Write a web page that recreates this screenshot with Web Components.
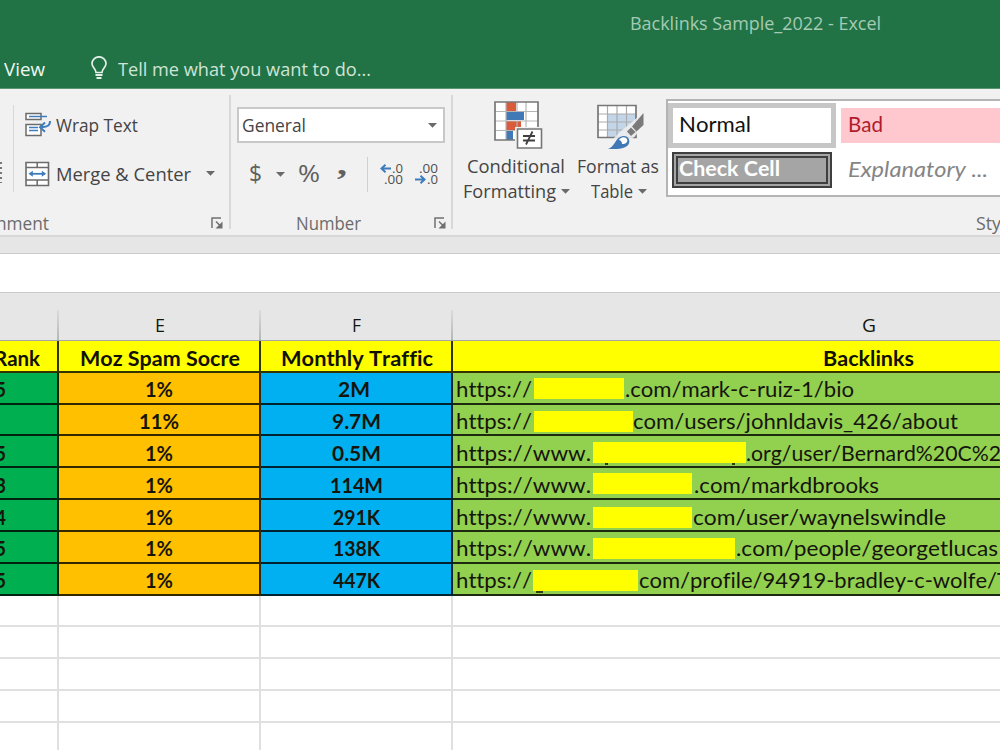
<!DOCTYPE html>
<html lang="en">
<head>
<meta charset="utf-8">
<title>Backlinks Sample_2022 - Excel</title>
<style>
    html, body { margin: 0; width: 1000px; height: 750px; overflow: hidden; background: #fff; }
</style>
</head>
<body>
<excel-window></excel-window>

<script>
// One line of text, squeezed or stretched to the width given in the "w" attribute
class FitText extends HTMLElement {
    constructor() {
        super();
        this.attachShadow({ mode: 'open' });
        this.shadowRoot.innerHTML = `
            <style>
                :host { display: inline-block; flex: none; white-space: nowrap; line-height: 1.2; font-variant-ligatures: none; font-kerning: none; }
                span { display: inline-block; transform-origin: 0 50%; }
            </style>
            <span><slot></slot></span>
        `;
    }

    connectedCallback() {
        const w = parseFloat(this.getAttribute('w'));
        const span = this.shadowRoot.querySelector('span');
        const natural = span.getBoundingClientRect().width;
        this.style.width = w + 'px';
        if (natural > 0) {
            span.style.transform = `scaleX(${w / natural})`;
        }
    }
}

const ICONS = {
    bulb: [16, 24, `<g fill="none" stroke="#e4f0e8" stroke-width="1.7"><path d="M5 16.5C5 13 1 11.500 1 7.500a7 6.700 0 0 1 14 0C15 11.500 11 13 11 16.500Z"/><path d="M4.500 19h7M5.500 22h5" stroke-width="2"/></g>`],
    wrap: [27, 26, `<g fill="#fff" stroke="#6b6b6b" stroke-width="1.500"><path d="M1 1.500h15v6H1zM1 12.500h15v11H1z"/></g><path d="M4 4.500h18M4 15.500h9M4 18.500h9" stroke="#3e7cbc" stroke-width="1.500"/><path d="M25 9c.3 4-2 6.200-8 6.200M20 10.500l-5 4.700 5 4.500" fill="none" stroke="#3e7cbc" stroke-width="2"/>`],
    merge: [25, 26, `<path d="M1 1.500h22.500v23H1z" fill="#fff" stroke="#6b6b6b" stroke-width="1.600"/><path d="M1 6.500h22.500M1 19h22.500M12.200 1.500v5M12.200 19v5" stroke="#6b6b6b" stroke-width="1.500"/><path d="M5 12.800h15" stroke="#3e7cbc" stroke-width="1.800"/><path d="M7.800 9.800v6L3.500 12.800zM16.800 9.800v6l4.300-3z" fill="#3e7cbc"/>`],
    caret: [9, 5, `<path d="M0 0h9L4.500 4.800z" fill="#6a6a6a"/>`],
    launcher: [12, 12, `<path d="M1 11V1h9" fill="none" stroke="#707070" stroke-width="1.500"/><path d="M5 4.500l4.500 4.500" stroke="#707070" stroke-width="1.500"/><path d="M11.500 4.500v7h-7z" fill="#707070"/>`],
    arrowLeft: [11, 9, `<path d="M11 4.500H2M5.500.8L1.500 4.500l4 3.700" fill="none" stroke="#3e7cbc" stroke-width="2"/>`],
    arrowRight: [11, 9, `<path d="M0 4.500h9M5.500.8l4 3.700-4 3.700" fill="none" stroke="#3e7cbc" stroke-width="2"/>`],
    conditional: [49, 49, `
        <path d="M1 1h43v38H1z" fill="#fff"/>
        <path d="M12 1h10v9H12zM12 20h15v9H12z" fill="#d95b3c"/>
        <path d="M12 11h18v8H12zM12 30h7v9h-7z" fill="#4079b5"/>
        <path d="M1 10.500h43M1 20h43M1 29.500h43M12 1v38M23 1v9M32 1v38M23 20v9" stroke="#b5b5b5" stroke-width="1.200"/>
        <path d="M1 1h43v38H1z" fill="none" stroke="#777" stroke-width="1.700"/>
        <path d="M21 26h28v23H21z" fill="#f1f1f1"/>
        <path d="M23.500 28h24v19h-24z" fill="#fff" stroke="#777" stroke-width="1.600"/>
        <path d="M29 35h12M29 39.500h12M38.500 30.500l-6.500 13" stroke="#404040" stroke-width="1.800"/>`],
    formatTable: [48, 46, `
        <path d="M1 1.500h38v32H1z" fill="#fff"/>
        <path d="M11 10h28v23.500H11z" fill="#c3d5e9"/>
        <path d="M1 10h38M1 18h38M1 26h38M10.500 1.500v32M20 1.500v32M29.500 1.500v32" stroke="#ababab" stroke-width="1.200"/>
        <path d="M1 1.500h38v32H1z" fill="none" stroke="#777" stroke-width="1.700"/>
        <path d="M48 7v15L33 37H14l9-9z" fill="#f1f1f1" opacity=".85"/>
        <path d="M46.500 9v12l-7 6.500-4.500-5z" fill="#7a7a7a"/>
        <path d="M34 23.500l4.500 4.500-4.500 4-4-4.500z" fill="#7a7a7a"/>
        <path d="M11 45c5-2 6-5.500 9-9.500 3-4 10-5 12 0 2 6-5 9.500-12 9.500z" fill="#4079b5"/>
        <path d="M22 36c2-4 8-3.500 8.300.5.2 2.500-3 4-5.300 3.500 0-2-1-3.500-3-4z" fill="#fff"/>`]
};

class XlIcon extends HTMLElement {
    constructor() {
        super();
        this.attachShadow({ mode: 'open' });
    }

    connectedCallback() {
        const [w, h, body] = ICONS[this.getAttribute('name')];
        this.shadowRoot.innerHTML = `
            <style>
                :host { display: block; flex: none; width: ${w}px; height: ${h}px; }
                svg { display: block; }
            </style>
            <svg width="${w}" height="${h}" viewBox="0 0 ${w} ${h}">${body}</svg>
        `;
    }
}

class TitleBar extends HTMLElement {
    constructor() {
        super();
        this.attachShadow({ mode: 'open' });
        this.shadowRoot.innerHTML = `
            <style>
                :host { display: block; height: 89px; background: #217346; box-sizing: border-box; border-bottom: 1px solid #5b9673; }
                .title { display: flex; align-items: center; height: 46px; padding-left: 630px; color: #a5cbb4; }
                .tabs { display: flex; align-items: center; height: 46px; padding-left: 4px; color: #f0f7f2; }
                xl-icon { margin: -2px 11px 0 46px; }
                .tell { color: #cfe4d7; }
            </style>
            <div class="title"><fit-text w="251">Backlinks Sample_2022 - Excel</fit-text></div>
            <div class="tabs">
                <fit-text w="41">View</fit-text>
                <xl-icon name="bulb"></xl-icon>
                <fit-text class="tell" w="253">Tell me what you want to do...</fit-text>
            </div>
        `;
    }
}

// Ribbon group: content on top, caption and dialog launcher at the foot
class RibbonGroup extends HTMLElement {
    constructor() {
        super();
        this.attachShadow({ mode: 'open' });
        this.shadowRoot.innerHTML = `
            <style>
                :host { display: flex; flex-direction: column; flex: none; box-sizing: border-box; height: 134px; margin-top: 6px; border-right: 2px solid #d8d8d8; }
                .body { flex: none; height: 115px; }
                .foot { display: flex; align-items: center; flex: none; height: 26px; color: #6b6b6b; font-size: 17.500px; }
            </style>
            <div class="body"><slot></slot></div>
            <div class="foot"><slot name="foot"></slot></div>
        `;
    }
}

class StyleGallery extends HTMLElement {
    constructor() {
        super();
        this.attachShadow({ mode: 'open' });
        this.shadowRoot.innerHTML = `
            <style>
                :host { display: grid; grid-template-columns: 168px 240px; grid-template-rows: 45px 45px; column-gap: 5px; box-sizing: border-box; width: 420px; height: 98px; padding-top: 2px; background: #fff; border: 2px solid #b4b4b4; border-right: 0; font: 21.500px Lato, sans-serif; }
                div { box-sizing: border-box; display: flex; align-items: center; }
                .normal { border: 5px solid #c6c6c6; padding: 0 0 2px 6px; color: #111; }
                .bad { margin: 5px 0; padding: 0 0 2px 7px; background: #ffc7ce; color: #b01c2b; }
                .check { margin: 4px 4px 5px; border: 6px double #3f3f3f; background: #a5a5a5; color: #fff; font-weight: bold; padding: 0 0 2px 1px; }
                .expl { padding: 0 0 2px 7px; color: #858585; font-style: italic; }
            </style>
            <div class="normal"><fit-text w="72">Normal</fit-text></div>
            <div class="bad"><fit-text w="35">Bad</fit-text></div>
            <div class="check"><fit-text w="101">Check Cell</fit-text></div>
            <div class="expl"><fit-text w="140">Explanatory ...</fit-text></div>
        `;
    }
}

class ExcelRibbon extends HTMLElement {
    constructor() {
        super();
        this.attachShadow({ mode: 'open' });
        this.shadowRoot.innerHTML = `
            <style>
                :host { display: flex; box-sizing: border-box; height: 148px; background: #f1f1f1; border-bottom: 2px solid #d8d8d8; overflow: hidden; color: #444; }
                .row { display: flex; align-items: center; }
                .align { width: 231px; }
                .number { width: 222px; }
                .styles { width: 900px; border: 0; }
                .align-body { display: flex; }
                .stub { width: 2px; height: 21px; margin: 67px 11px 0 0; background: repeating-linear-gradient(#777 0 1.500px, transparent 1.500px 5px); }
                .sep { width: 1px; height: 87px; margin-top: 10px; background: #d8d8d8; }
                .buttons { padding: 5px 0 0 11px; }
                .buttons .row { height: 49px; }
                .buttons fit-text { margin: 2px 0 0 4px; }
                .select { box-sizing: border-box; width: 208px; height: 36px; margin: 12px 0 0 6px; padding: 0 6px 0 3px; border: 2px solid #c8c8c8; background: #fff; justify-content: space-between; }
                .formats { height: 62px; padding-left: 18px; color: #606060; }
                .sign { font-size: 23px; }
                .comma { font: bold 30px/30px "Liberation Serif", serif; height: 50px; }
                .dec { font-size: 13.500px; color: #505050; }
                .dec div { display: flex; align-items: center; height: 11px; }
                .dec fit-text { line-height: 11px; }
                .styles-body { display: flex; }
                .big { display: flex; flex-direction: column; align-items: center; }
                .big .row { height: 25px; }
                .big .row xl-icon { margin-left: 5px; }
            </style>
            <ribbon-group class="align">
                <div class="align-body">
                    <div class="stub"></div>
                    <div class="sep"></div>
                    <div class="buttons">
                        <div class="row"><xl-icon name="wrap"></xl-icon><fit-text w="82">Wrap Text</fit-text></div>
                        <div class="row"><xl-icon name="merge"></xl-icon><fit-text w="135" style="margin-left:6px">Merge &amp; Center</fit-text><xl-icon name="caret" style="margin-left:15px"></xl-icon></div>
                    </div>
                </div>
                <fit-text slot="foot" w="53" style="margin-left:-4px">nment</fit-text>
                <xl-icon slot="foot" name="launcher" style="margin-left:162px"></xl-icon>
            </ribbon-group>
            <ribbon-group class="number">
                <div class="row select"><fit-text w="64">General</fit-text><xl-icon name="caret"></xl-icon></div>
                <div class="row formats">
                    <fit-text class="sign" w="13">$</fit-text>
                    <xl-icon name="caret" style="margin-left:14px"></xl-icon>
                    <fit-text class="sign" w="22" style="margin-left:13px">%</fit-text>
                    <fit-text class="comma" w="10" style="margin-left:17px">,</fit-text>
                    <div style="width:1px;height:35px;margin-left:20px;background:#d0d0d0"></div>
                    <div class="dec" style="margin-left:12px">
                        <div><xl-icon name="arrowLeft"></xl-icon><fit-text w="11" style="margin-left:1px">.0</fit-text></div>
                        <div style="padding-left:4px"><fit-text w="19">.00</fit-text></div>
                    </div>
                    <div class="dec" style="margin-left:12px">
                        <div style="padding-left:4px"><fit-text w="19">.00</fit-text></div>
                        <div><xl-icon name="arrowRight"></xl-icon><fit-text w="11" style="margin-left:1px">.0</fit-text></div>
                    </div>
                </div>
                <fit-text slot="foot" w="65" style="margin-left:65px">Number</fit-text>
                <xl-icon slot="foot" name="launcher" style="margin-left:73px"></xl-icon>
            </ribbon-group>
            <ribbon-group class="styles">
                <div class="styles-body">
                    <div class="big" style="width:108px;margin-left:9px;padding-top:6px">
                        <xl-icon name="conditional" style="margin:0 0 4px 4px"></xl-icon>
                        <div class="row"><fit-text w="98">Conditional</fit-text></div>
                        <div class="row"><fit-text w="93">Formatting</fit-text><xl-icon name="caret"></xl-icon></div>
                    </div>
                    <div class="big" style="width:84px;margin-left:6px;padding-top:9px">
                        <xl-icon name="formatTable" style="margin:0 0 4px 5px"></xl-icon>
                        <div class="row"><fit-text w="82">Format as</fit-text></div>
                        <div class="row" style="margin-left:2px"><fit-text w="42">Table</fit-text><xl-icon name="caret"></xl-icon></div>
                    </div>
                    <style-gallery style="margin:4px 0 0 6px"></style-gallery>
                </div>
                <fit-text slot="foot" w="48" style="margin-left:523px">Styles</fit-text>
            </ribbon-group>
        `;
    }
}

// Links are lists of parts: [text, width] or { w: width, y: shift, gap: space after, marks }
const ROWS = [
    { rank: '5', spam: ['1%', 28], traffic: ['2M', 32, 4], link: [['https://', 76], { x: 2, w: 90, y: 0, gap: 1 }, ['.com/mark-c-ruiz-1/bio', 229]] },
    { rank: '', spam: ['11%', 40], traffic: ['9.7M', 49], link: [['https://', 76], { x: 2, w: 99, y: 1, gap: 0 }, ['com/users/johnldavis_426/about', 325]] },
    { rank: '5', spam: ['1%', 28], traffic: ['0.5M', 49], link: [['https://www.', 135], { x: 2, w: 153, y: 1, gap: 0, marks: [[12, 3], [139, 3]] }, ['.org/user/Bernard%20C%2', 255]] },
    { rank: '3', spam: ['1%', 28], traffic: ['114M', 53], link: [['https://www.', 135], { x: 2, w: 99, y: 0, gap: 2 }, ['.com/markdbrooks', 185]] },
    { rank: '4', spam: ['1%', 28], traffic: ['291K', 47], link: [['https://www.', 135], { x: 2, w: 99, y: 2, gap: 1 }, ['com/user/waynelswindle', 253]] },
    { rank: '5', spam: ['1%', 28], traffic: ['138K', 47], link: [['https://www.', 135], { x: 2, w: 142, y: 1, gap: 1 }, ['.com/people/georgetlucas', 262]] },
    { rank: '5', spam: ['1%', 28], traffic: ['447K', 47], link: [['https://', 76], { x: 1, w: 105, y: 1, gap: 1, marks: [[3, 7]] }, ['com/profile/94919-bradley-c-wolfe/', 358], ['T', 11]] }
];

class SheetGrid extends HTMLElement {
    constructor() {
        super();
        this.attachShadow({ mode: 'open' });
    }

    connectedCallback() {
        this.render();
    }

    linkPart(part) {
        if (Array.isArray(part)) {
            return `<fit-text w="${part[1]}">${part[0]}</fit-text>`;
        }
        const marks = (part.marks || []).map(m => `<i style="left:${m[0]}px;width:${m[1]}px"></i>`).join('');
        return `<span class="mask" style="width:${part.w}px;margin:${part.y * 2}px ${part.gap}px 0 ${part.x}px">${marks}</span>`;
    }

    render() {
        const rows = ROWS.map(r => `
            <div class="cell rank"><fit-text w="11">${r.rank}</fit-text></div>
            <div class="cell spam"><fit-text w="${r.spam[1]}">${r.spam[0]}</fit-text></div>
            <div class="cell traffic"><fit-text w="${r.traffic[1]}" style="margin-right:${r.traffic[2] || 0}px">${r.traffic[0]}</fit-text></div>
            <div class="cell link">${r.link.map(p => this.linkPart(p)).join('')}</div>
        `).join('');
        const blank = '<div class="blank"></div>'.repeat(20);

        this.shadowRoot.innerHTML = `
            <style>
                :host { display: block; overflow: hidden; font: 21.500px Lato, sans-serif; color: #15150c; }
                .heads, .grid { display: grid; grid-template-columns: 59px 202px 192px 832px; }
                .heads { height: 48px; box-sizing: border-box; background: #e6e6e6; border-bottom: 1px solid #a5a5a5; padding-top: 17px; font: 18.500px "Open Sans", sans-serif; }
                .heads div { display: flex; justify-content: center; align-items: center; border-right: 2px solid; border-image: linear-gradient(#dcdcdc, #b5b5b5) 1; }
                .heads fit-text { margin-left: 1px; }
                .grid { grid-auto-rows: 31.830px; }
                .cell { box-sizing: border-box; display: flex; align-items: center; justify-content: center; border: 0 solid rgba(0, 0, 0, .8); border-width: 0 2px 2px 0; font-weight: bold; overflow: hidden; min-width: 0; padding-top: 1px; }
                .cell fit-text { margin-top: 4px; }
                .head { background: #ff0; color: #111100; }
                .head fit-text { margin-left: 1px; }
                .rank { background: #00b050; justify-content: flex-end; padding-right: 51px; }
                .spam { background: #ffc000; }
                .traffic { background: #00b0f0; }
                .link { background: #92d050; justify-content: flex-start; font-weight: normal; padding-left: 3px; }
                .mask { position: relative; flex: none; height: 21px; background: #ff0; }
                .mask i { position: absolute; bottom: -2px; height: 2px; background: #304015; }
                .blank { box-sizing: border-box; border: 0 solid #e0e0e0; border-width: 0 2px 2px 0; }
            </style>
            <div class="heads">
                <div></div>
                <div><fit-text w="10">E</fit-text></div>
                <div><fit-text w="9">F</fit-text></div>
                <div><fit-text w="14">G</fit-text></div>
            </div>
            <div class="grid">
                <div class="cell head" style="justify-content:flex-end;padding-right:17px"><fit-text w="46">Rank</fit-text></div>
                <div class="cell head"><fit-text w="160">Moz Spam Socre</fit-text></div>
                <div class="cell head"><fit-text w="152">Monthly Traffic</fit-text></div>
                <div class="cell head"><fit-text w="91">Backlinks</fit-text></div>
                ${rows}
                ${blank}
            </div>
        `;
    }
}

class ExcelWindow extends HTMLElement {
    constructor() {
        super();
        this.attachShadow({ mode: 'open' });
        this.shadowRoot.innerHTML = `
            <style>
                :host { display: flex; flex-direction: column; width: 1000px; height: 750px; overflow: hidden; font: 18.500px "Open Sans", "Noto Sans", sans-serif; background: #fff; }
                title-bar, excel-ribbon, .gap, .formula { flex: none; }
                .gap { height: 16px; background: #e6e6e6; }
                .formula { height: 38px; background: #fff; border: 1px solid #cacaca; border-width: 1px 0; }
                sheet-grid { flex: 1; min-height: 0; }
            </style>
            <title-bar></title-bar>
            <excel-ribbon></excel-ribbon>
            <div class="gap"></div>
            <div class="formula"></div>
            <sheet-grid></sheet-grid>
        `;
    }
}

customElements.define('fit-text', FitText);
customElements.define('xl-icon', XlIcon);
customElements.define('title-bar', TitleBar);
customElements.define('ribbon-group', RibbonGroup);
customElements.define('style-gallery', StyleGallery);
customElements.define('excel-ribbon', ExcelRibbon);
customElements.define('sheet-grid', SheetGrid);
customElements.define('excel-window', ExcelWindow);
</script>
</body>
</html>
